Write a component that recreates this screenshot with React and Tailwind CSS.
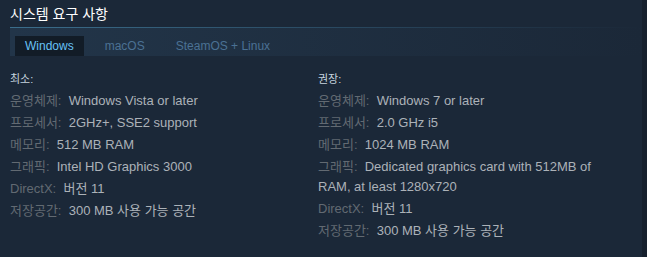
const minimum = [
  ["운영체제:", "Windows Vista or later"],
  ["프로세서:", "2GHz+, SSE2 support"],
  ["메모리:", "512 MB RAM"],
  ["그래픽:", "Intel HD Graphics 3000"],
  ["DirectX:", "버전 11"],
  ["저장공간:", "300 MB 사용 가능 공간"],
];

const recommended = [
  ["운영체제:", "Windows 7 or later"],
  ["프로세서:", "2.0 GHz i5"],
  ["메모리:", "1024 MB RAM"],
  ["그래픽:", "Dedicated graphics card with 512MB of RAM, at least 1280x720"],
  ["DirectX:", "버전 11"],
  ["저장공간:", "300 MB 사용 가능 공간"],
];

function Column({ title, rows }) {
  return (
    <div className="w-[290px]">
      <div className="text-[11px] text-[#c6d4df] leading-[18px] mb-[3px]">{title}</div>
      <ul className="text-[13px] leading-[20px]">
        {rows.map(([label, value]) => (
          <li key={label} className="mb-[2px]">
            <span className="text-[#626a72]">{label}</span>
            <span className="text-[#acb2b8]">&nbsp; {value}</span>
          </li>
        ))}
      </ul>
    </div>
  );
}

export default function App() {
  return (
    <div
      className="w-[647px] h-[257px] bg-[#1b2838] flex"
      style={{ fontFamily: '"Liberation Sans", Arial, "Noto Sans CJK KR", sans-serif' }}
    >
      <div className="flex-1 pl-[10px] pt-[4px]">
        <h2 className="text-[14px] leading-[20px] text-white pb-[3px]">시스템 요구 사항</h2>
        <div className="h-px bg-gradient-to-r from-[#3b6e8c] via-[#2a4a62] to-[#1b2838]" />
        <div className="h-[28px] flex items-end pl-[5px] bg-gradient-to-r from-[#223549] to-[#1b2838]">
          <div className="h-[20px] px-[10px] bg-[#121c27] text-[#67c1f5] text-[12px] leading-[20px]">Windows</div>
          <div className="h-[20px] ml-[11px] px-[10px] text-[#4b7194] text-[12px] leading-[20px]">macOS</div>
          <div className="h-[20px] ml-[11px] px-[10px] text-[#4b7194] text-[12px] leading-[20px]">SteamOS + Linux</div>
        </div>
        <div className="flex gap-[18px] pt-[14px]">
          <Column title="최소:" rows={minimum} />
          <Column title="권장:" rows={recommended} />
        </div>
      </div>
      <div className="w-[5px] bg-[#16202d]" />
    </div>
  );
}
